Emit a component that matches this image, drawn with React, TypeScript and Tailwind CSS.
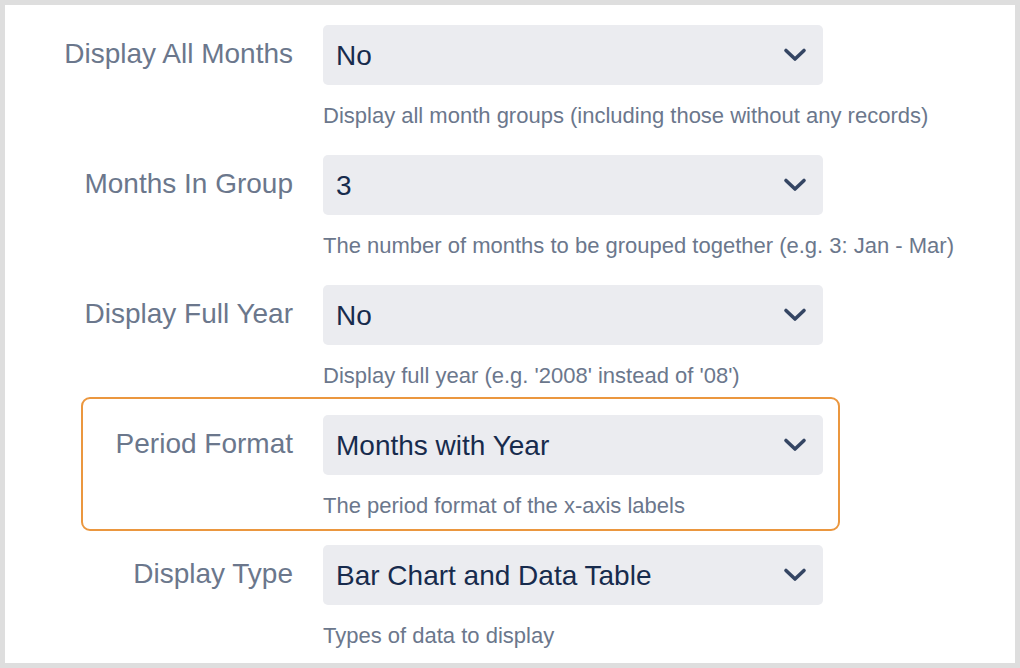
import React from "react";

type Row = { label: string; value: string; help: string; highlight?: boolean };

const rows: Row[] = [
  { label: "Display All Months", value: "No", help: "Display all month groups (including those without any records)" },
  { label: "Months In Group", value: "3", help: "The number of months to be grouped together (e.g. 3: Jan - Mar)" },
  { label: "Display Full Year", value: "No", help: "Display full year (e.g. '2008' instead of '08')" },
  { label: "Period Format", value: "Months with Year", help: "The period format of the x-axis labels", highlight: true },
  { label: "Display Type", value: "Bar Chart and Data Table", help: "Types of data to display" },
];

function Chevron() {
  return (
    <svg width="24" height="16" viewBox="0 0 24 16" fill="none">
      <path d="M3 3.5 L12 12 L21 3.5" stroke="#344563" strokeWidth="3.6" strokeLinecap="round" strokeLinejoin="round" />
    </svg>
  );
}

export default function App() {
  return (
    <div className="w-[1020px] h-[668px] bg-[#dedede] p-[5px] overflow-hidden" style={{ fontFamily: '"Liberation Sans", Arial, Helvetica, sans-serif' }}>
      <div className="w-[1010px] h-[658px] bg-white pt-[4px] flex flex-col">
        {rows.map((r) => (
          <div
            key={r.label}
            className={
              "ml-[78px] w-[755px] h-[130px] shrink-0 flex gap-[30px] pt-[16px] rounded-[7px] " +
              (r.highlight ? "outline-2 outline-[#eb973f]" : "")
            }
          >
            <div className="w-[210px] shrink-0 flex justify-end whitespace-nowrap text-[28px] leading-[32px] text-[#6b778c] pt-[13px]">{r.label}</div>
            <div className="w-[500px] shrink-0 flex flex-col">
              <div className="h-[60px] shrink-0 bg-[#ebecf0] rounded-[5px] flex items-center justify-between pl-[13px] pr-[16px]">
                <span className="text-[28px] leading-[32px] text-[#172b4d] pt-[2px]">{r.value}</span>
                <Chevron />
              </div>
              <div className="mt-[18px] whitespace-nowrap text-[22px] leading-[25px] text-[#6b778c]">{r.help}</div>
            </div>
          </div>
        ))}
      </div>
    </div>
  );
}
